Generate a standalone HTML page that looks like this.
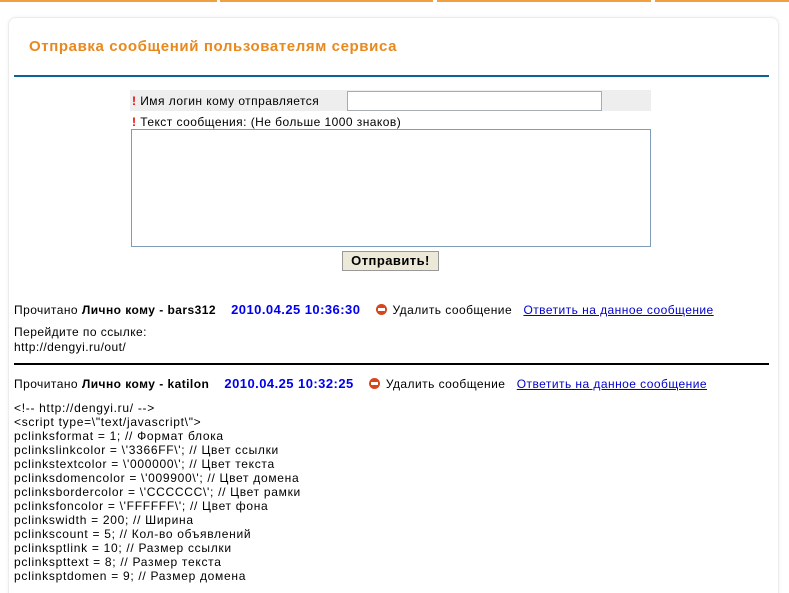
<!DOCTYPE html>
<html><head><meta charset="utf-8"><style>
html,body{margin:0;height:593px;overflow:hidden}
body{background:#fff;font-family:"Liberation Sans",sans-serif;font-size:12px;color:#000;width:789px;position:relative;letter-spacing:0.45px}
.a{position:absolute;white-space:nowrap}
.top{position:absolute;top:0;height:2px;background:#f0a040}
b{font-weight:bold}
.blue{color:#0000ee;font-weight:bold}
.lnk{color:#0000cc;text-decoration:underline}
.ic{display:inline-block;width:11px;height:11px;border-radius:50%;background:#d8461c;position:relative;vertical-align:-1px;margin-right:6px}
.ic:after{content:"";position:absolute;left:2px;right:2px;top:4px;height:3px;background:#fff}
</style></head><body>
<div class="top" style="left:0;width:217px"></div>
<div class="top" style="left:220px;width:213px"></div>
<div class="top" style="left:437px;width:214px"></div>
<div class="top" style="left:655px;width:134px"></div>
<div style="position:absolute;left:8px;top:17px;width:769px;height:600px;border:1px solid #ececec;border-radius:8px;box-shadow:0 0 3px #eee"></div>
<div class="a" style="left:29px;top:38px;font-size:15px;font-weight:bold;color:#e8891e;letter-spacing:0.6px">Отправка сообщений пользователям сервиса</div>
<div style="position:absolute;left:14px;top:75px;width:755px;height:2px;background:#0a6399"></div>
<div style="position:absolute;left:130px;top:90px;width:521px;height:21px;background:#eeeeee"></div>
<div class="a" style="left:132px;top:94px"><span style="color:#e00;font-weight:bold">!</span> Имя логин кому отправляется</div>
<div style="position:absolute;left:347px;top:91px;width:253px;height:18px;border:1px solid #a5acb2;background:#fff"></div>
<div class="a" style="left:132px;top:115px"><span style="color:#e00;font-weight:bold">!</span> Текст сообщения: (Не больше 1000 знаков)</div>
<div style="position:absolute;left:131px;top:129px;width:518px;height:116px;border:1px solid #7f9db9;background:#fff"></div>
<div class="a" style="left:342px;top:251px;width:95px;height:18px;border:1px solid #999;background:#ece9d8;text-align:center;font-weight:bold;font-size:13px;line-height:18px">Отправить!</div>
<div class="a" style="left:14px;top:302px">Прочитано <b>Лично кому - bars312</b> &nbsp;&nbsp;&nbsp;<span class="blue" style="font-size:13px">2010.04.25 10:36:30</span> &nbsp;&nbsp;&nbsp;<span class="ic"></span>Удалить сообщение &nbsp;&nbsp;<span class="lnk">Ответить на данное сообщение</span></div>
<div class="a" style="left:14px;top:325px;line-height:15px">Перейдите по ссылке:<br>http://dengyi.ru/out/</div>
<div style="position:absolute;left:14px;top:363px;width:755px;height:2px;background:#000"></div>
<div class="a" style="left:14px;top:376px">Прочитано <b>Лично кому - katilon</b> &nbsp;&nbsp;&nbsp;<span class="blue" style="font-size:13px">2010.04.25 10:32:25</span> &nbsp;&nbsp;&nbsp;<span class="ic"></span>Удалить сообщение &nbsp;&nbsp;<span class="lnk">Ответить на данное сообщение</span></div>
<div class="a" style="left:14px;top:401px;line-height:14px;letter-spacing:0.7px">&lt;!-- http://dengyi.ru/ --&gt;<br>&lt;script type=\"text/javascript\"&gt;<br>pclinksformat = 1; // Формат блока<br>pclinkslinkcolor = \'3366FF\'; // Цвет ссылки<br>pclinkstextcolor = \'000000\'; // Цвет текста<br>pclinksdomencolor = \'009900\'; // Цвет домена<br>pclinksbordercolor = \'CCCCCC\'; // Цвет рамки<br>pclinksfoncolor = \'FFFFFF\'; // Цвет фона<br>pclinkswidth = 200; // Ширина<br>pclinkscount = 5; // Кол-во объявлений<br>pclinksptlink = 10; // Размер ссылки<br>pclinkspttext = 8; // Размер текста<br>pclinksptdomen = 9; // Размер домена</div>
</body></html>
